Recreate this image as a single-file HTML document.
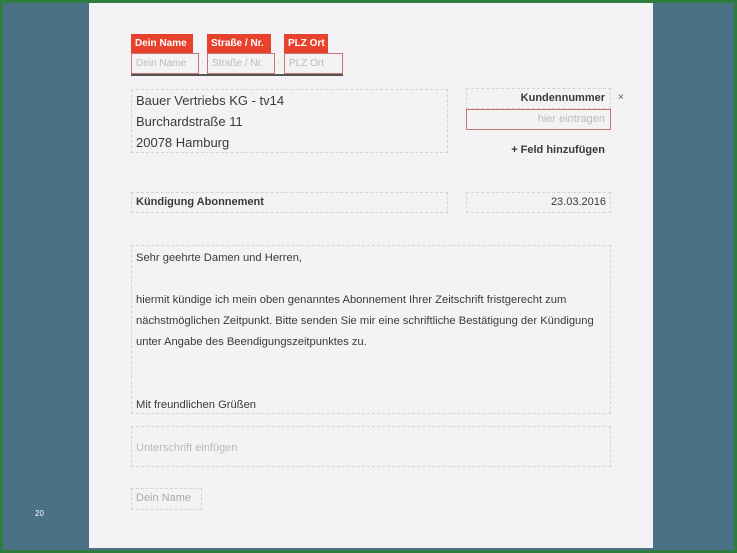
<!DOCTYPE html>
<html><head><meta charset="utf-8"><style>
*{margin:0;padding:0;box-sizing:border-box}
body{width:737px;height:553px;background:#2e7d3e;position:relative;overflow:hidden;font-family:"Liberation Sans",sans-serif;color:#3a3a3a}
.bg{position:absolute;left:3px;top:3px;width:731px;height:547px;background:#4b7186}
.page{position:absolute;left:89px;top:3px;width:564px;height:545px;background:#f4f2f4}
.a{position:absolute;white-space:nowrap}
.d{border:1px dashed #d6d3d6}
.tag{background:#e8412c;color:#fff;font-weight:bold;font-size:10px;line-height:19px;padding:0 4px;height:19px}
.in{border:1px solid #c9756d;color:#bbb;font-size:10px;line-height:19px;padding:0 4px;height:21px}
.t{font-size:11px}
</style></head><body>
<div class="bg"></div>
<div class="page"></div>
<div class="a" style="left:35px;top:509px;color:#fff;font-size:8px">20</div>

<div class="a tag" style="left:131px;top:34px;width:62px">Dein Name</div>
<div class="a tag" style="left:207px;top:34px;width:64px">Straße / Nr.</div>
<div class="a tag" style="left:284px;top:34px;width:44px">PLZ Ort</div>
<div class="a in" style="left:131px;top:53px;width:68px">Dein Name</div>
<div class="a" style="left:201px;top:57px;font-size:9px;color:#aaa">·</div>
<div class="a in" style="left:207px;top:53px;width:68px">Straße / Nr.</div>
<div class="a" style="left:277px;top:57px;font-size:9px;color:#aaa">·</div>
<div class="a in" style="left:284px;top:53px;width:59px">PLZ Ort</div>
<div class="a" style="left:131px;top:74px;width:212px;height:2px;background:#555"></div>

<div class="a d" style="left:131px;top:89px;width:317px;height:64px"></div>
<div class="a" style="left:136px;top:90px;font-size:13px;line-height:21px">Bauer Vertriebs KG - tv14<br>Burchardstraße 11<br>20078 Hamburg</div>

<div class="a d" style="left:466px;top:88px;width:145px;height:21px"></div>
<div class="a t" style="left:466px;top:92px;width:139px;text-align:right;font-weight:bold">Kundennummer</div>
<div class="a" style="left:618px;top:92px;font-size:10px;color:#555">×</div>
<div class="a" style="left:466px;top:109px;width:145px;height:21px;border:1px solid #c9756d"></div>
<div class="a t" style="left:466px;top:113px;width:139px;text-align:right;color:#bbb">hier eintragen</div>
<div class="a t" style="left:466px;top:144px;width:139px;text-align:right;font-weight:bold">+ Feld hinzufügen</div>

<div class="a d" style="left:131px;top:192px;width:317px;height:21px"></div>
<div class="a t" style="left:136px;top:196px;font-weight:bold">Kündigung Abonnement</div>
<div class="a d" style="left:466px;top:192px;width:145px;height:21px"></div>
<div class="a t" style="left:466px;top:196px;width:140px;text-align:right">23.03.2016</div>

<div class="a d" style="left:131px;top:245px;width:480px;height:169px"></div>
<div class="a" style="left:136px;top:248px;line-height:21px;font-size:11.2px">Sehr geehrte Damen und Herren,<br><br>hiermit kündige ich mein oben genanntes Abonnement Ihrer Zeitschrift fristgerecht zum<br>nächstmöglichen Zeitpunkt. Bitte senden Sie mir eine schriftliche Bestätigung der Kündigung<br>unter Angabe des Beendigungszeitpunktes zu.<br><br><br>Mit freundlichen Grüßen</div>

<div class="a d" style="left:131px;top:426px;width:480px;height:41px"></div>
<div class="a t" style="left:136px;top:442px;color:#bbb">Unterschrift einfügen</div>
<div class="a d" style="left:131px;top:488px;width:71px;height:22px"></div>
<div class="a t" style="left:136px;top:492px;color:#aaa">Dein Name</div>
</body></html>
